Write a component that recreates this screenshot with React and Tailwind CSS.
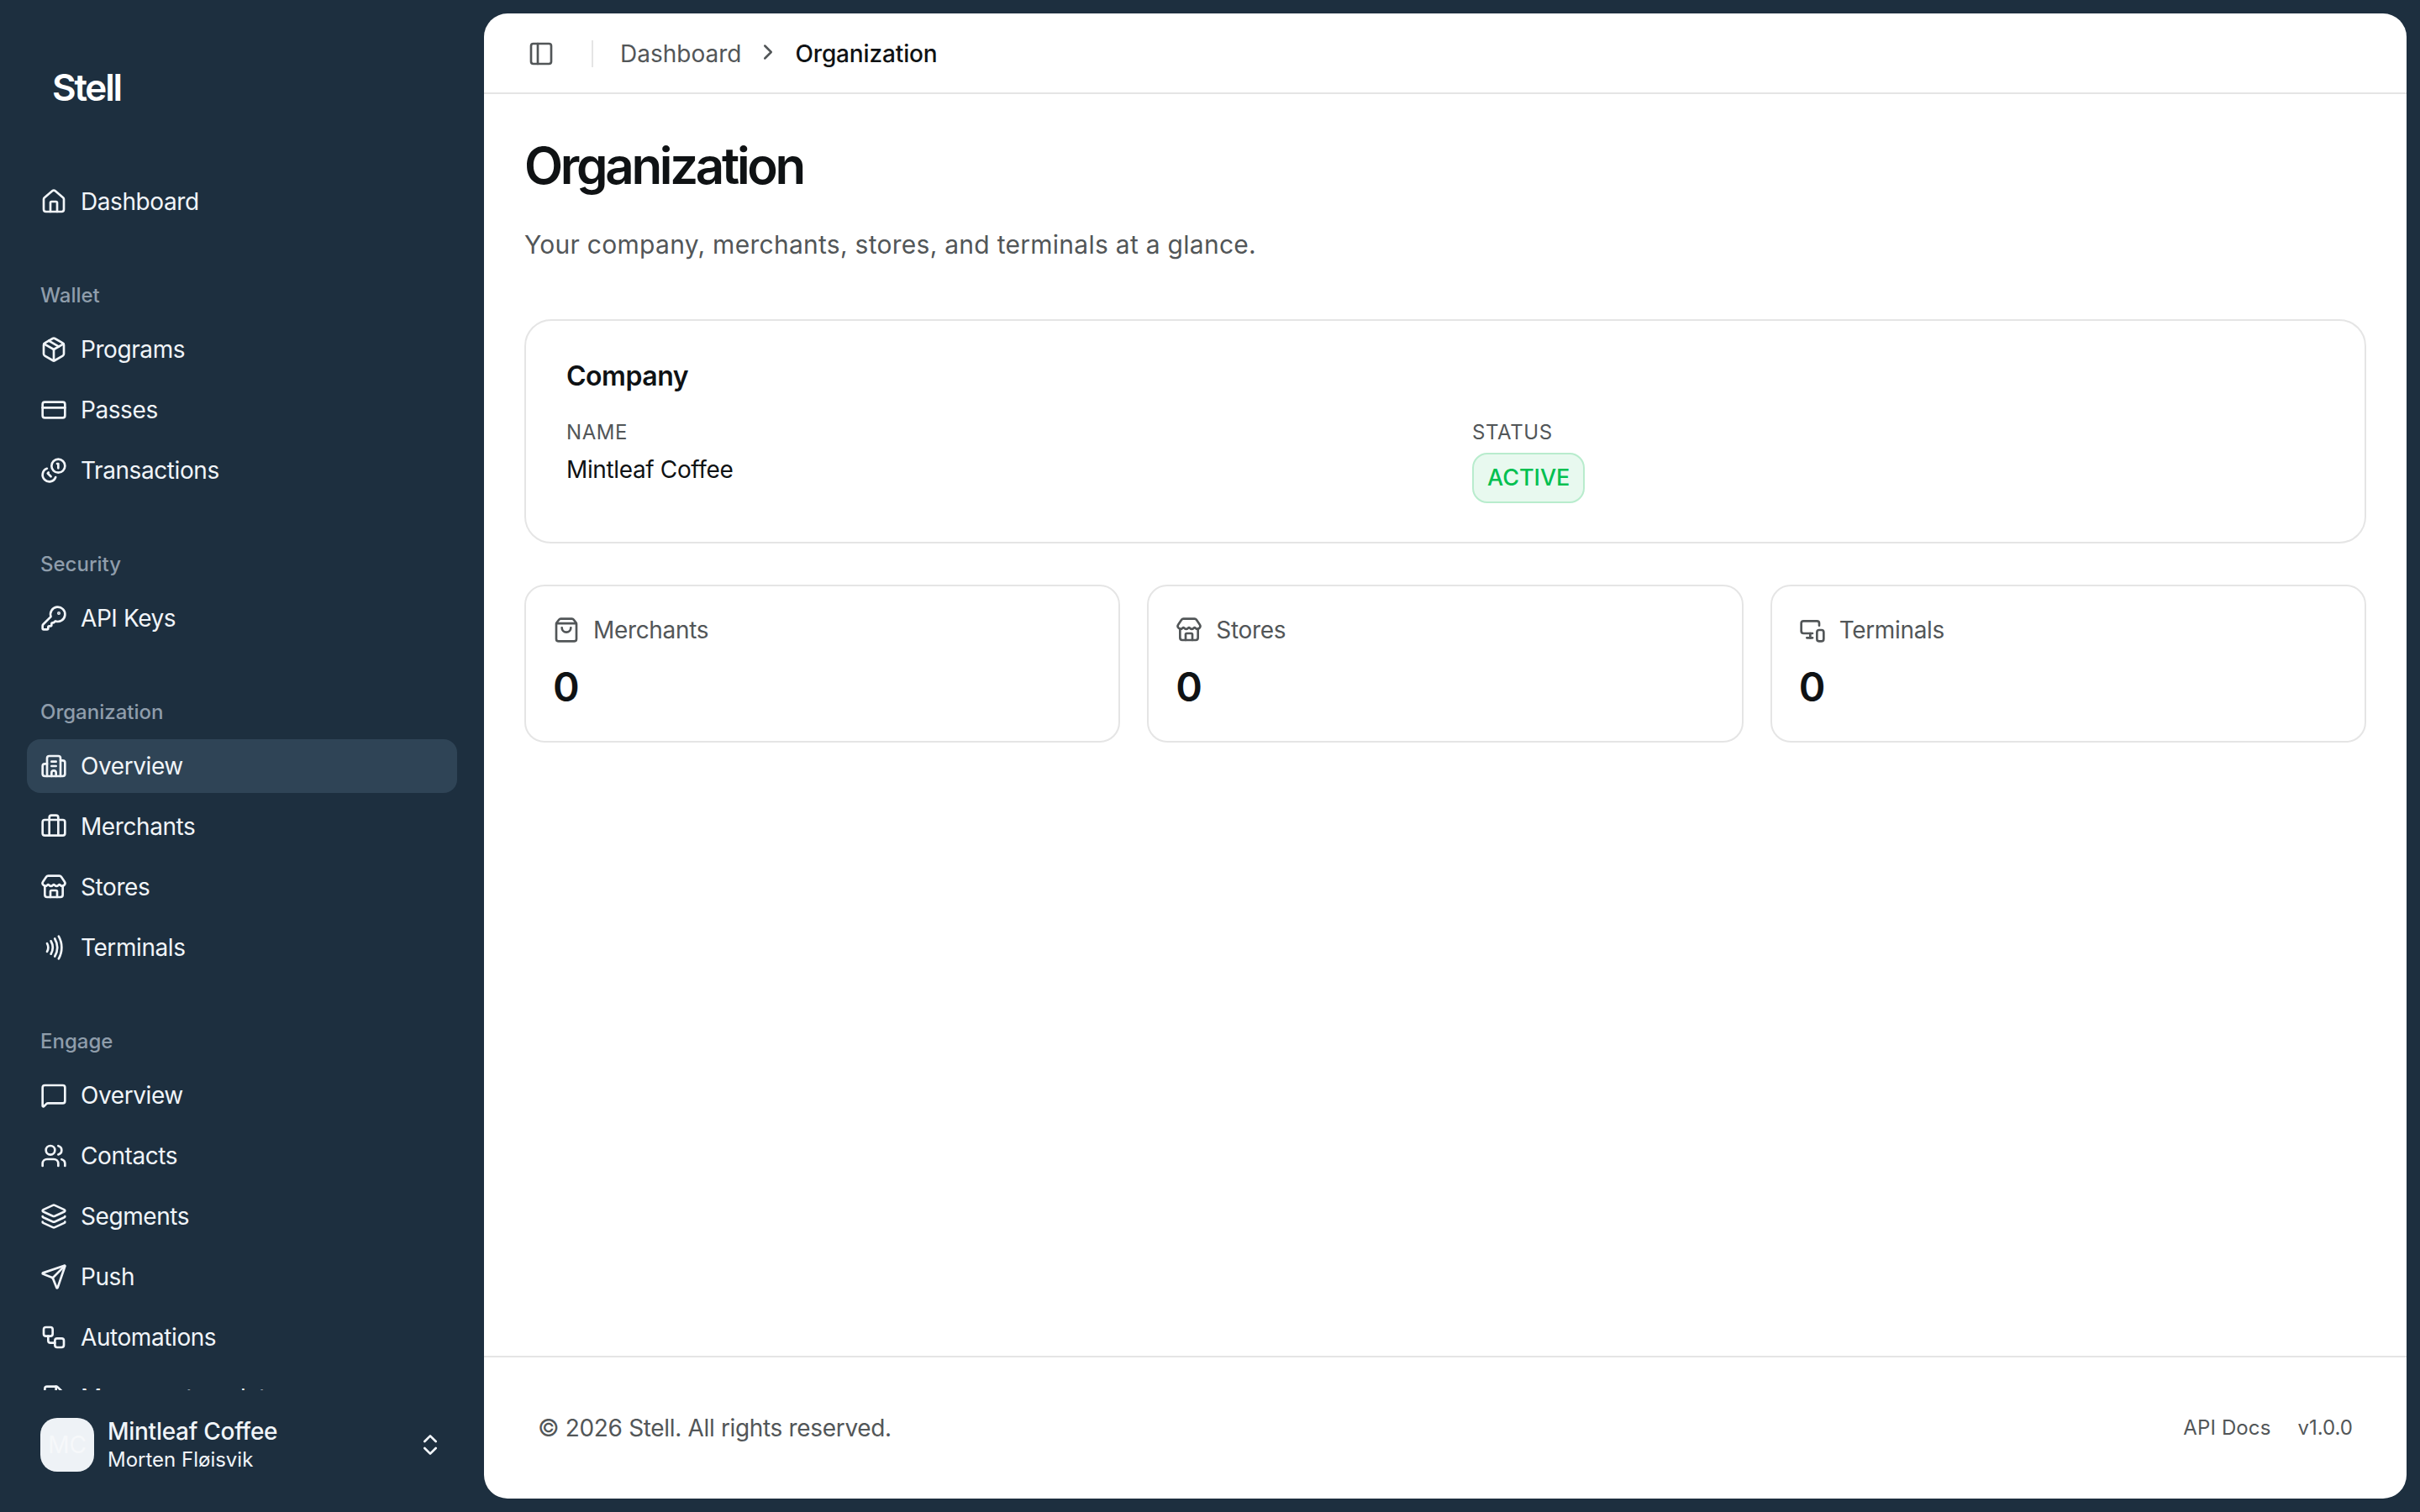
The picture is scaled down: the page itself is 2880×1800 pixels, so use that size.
import {
  Briefcase,
  ChevronRight,
  ChevronsUpDown,
  CreditCard,
  FileText,
  Building2,
  House,
  KeyRound,
  Layers,
  MessageSquare,
  MonitorSmartphone,
  Nfc,
  Package,
  PanelLeft,
  Send,
  ShoppingBag,
  Store,
  Users,
  Workflow,
} from "lucide-react";

const font = "font-['Inter','Liberation_Sans',sans-serif]";

// same as lucide's coins but with the big coin on the right
function CoinsIcon({ size, className }) {
  return (
    <svg
      width={size}
      height={size}
      viewBox="0 0 24 24"
      fill="none"
      stroke="currentColor"
      strokeWidth="2"
      strokeLinecap="round"
      strokeLinejoin="round"
      className={className}
    >
      <circle cx="16" cy="8" r="6" />
      <path d="M5.91 10.37A6 6 0 1 0 13.66 18" />
      <path d="M15 6h1v4" />
      <path d="m7.29 13.88-.7.71 2.82 2.82" />
    </svg>
  );
}

const groups = [
  {
    label: "Wallet",
    items: [
      { name: "Programs", icon: Package },
      { name: "Passes", icon: CreditCard },
      { name: "Transactions", icon: CoinsIcon },
    ],
  },
  { label: "Security", items: [{ name: "API Keys", icon: KeyRound }] },
  {
    label: "Organization",
    items: [
      { name: "Overview", icon: Building2, active: true },
      { name: "Merchants", icon: Briefcase },
      { name: "Stores", icon: Store },
      { name: "Terminals", icon: Nfc },
    ],
  },
  {
    label: "Engage",
    items: [
      { name: "Overview", icon: MessageSquare },
      { name: "Contacts", icon: Users },
      { name: "Segments", icon: Layers },
      { name: "Push", icon: Send },
      { name: "Automations", icon: Workflow },
      { name: "Message templates", icon: FileText },
    ],
  },
];

const stats = [
  { label: "Merchants", icon: ShoppingBag },
  { label: "Stores", icon: Store },
  { label: "Terminals", icon: MonitorSmartphone },
];

function NavItem({ item }) {
  const Icon = item.icon;
  return (
    <a
      className={`flex h-16 shrink-0 items-center gap-4 rounded-2xl px-4 text-[28px] tracking-[-0.015em] text-[#f1f5f9] ${
        item.active ? "bg-[#2f4456]" : ""
      }`}
    >
      <Icon size={32} className="shrink-0" />
      <span>{item.name}</span>
    </a>
  );
}

function Sidebar() {
  return (
    <aside className="flex h-full w-[576px] shrink-0 flex-col bg-[#1d2f3f]">
      <div className="flex h-[208px] shrink-0 items-center pl-[62px] text-[44px] leading-none font-semibold tracking-[-0.05em] text-white">
        Stell
      </div>
      <nav className="flex min-h-0 flex-1 flex-col overflow-hidden px-8">
        <div className="flex flex-col">
          <NavItem item={{ name: "Dashboard", icon: House }} />
        </div>
        {groups.map((group) => (
          <div key={group.label} className="mt-14 flex flex-col gap-2">
            <div className="flex h-12 items-center px-4 text-2xl font-medium text-[#8f9dab]">
              {group.label}
            </div>
            {group.items.map((item) => (
              <NavItem key={group.label + item.name} item={item} />
            ))}
          </div>
        ))}
      </nav>
      <div className="flex h-[145px] shrink-0 items-center gap-4 px-12 pb-[15px]">
        <div className="flex size-16 shrink-0 items-center justify-center rounded-[20px] bg-[#eef2f6] text-[28px] text-[#f6f8fa]">
          MC
        </div>
        <div className="min-w-0 flex-1">
          <div className="text-[28px] leading-[36px] font-medium tracking-[-0.01em] text-[#f1f5f9]">
            Mintleaf Coffee
          </div>
          <div className="text-2xl leading-[32px] text-[#f1f5f9]">Morten Fløisvik</div>
        </div>
        <ChevronsUpDown size={32} className="shrink-0 text-[#f1f5f9]" />
      </div>
    </aside>
  );
}

function Header() {
  return (
    <header className="flex h-24 shrink-0 items-center border-b-2 border-[#e5e5e5] px-[52px] pt-[2px]">
      <PanelLeft size={32} className="shrink-0 text-[#525658]" />
      <div className="mr-8 ml-[44px] h-8 w-[2px] bg-[#e5e5e5]" />
      <span className="text-[28px] text-[#525658]">Dashboard</span>
      <ChevronRight size={30} className="mx-[17px] mb-[4px] text-[#525658]" />
      <span className="text-[28px] font-medium tracking-[-0.005em] text-[#0f1214]">Organization</span>
    </header>
  );
}

function CompanyCard() {
  return (
    <section className="rounded-[32px] border-2 border-[#e5e5e5] px-12 pt-[48px] pb-[46px]">
      <h2 className="text-[32px] leading-[36px] font-semibold tracking-[-0.015em] text-[#0f1214]">
        Company
      </h2>
      <div className="mt-[33px] grid grid-cols-2 gap-16">
        <div>
          <div className="text-2xl leading-[32px] tracking-[0.025em] text-[#525658] uppercase">
            Name
          </div>
          <div className="mt-2 text-[28px] leading-[40px] tracking-[-0.013em] text-[#0f1214]">
            Mintleaf Coffee
          </div>
        </div>
        <div>
          <div className="text-2xl leading-[32px] tracking-[0.025em] text-[#525658] uppercase">
            Status
          </div>
          <div className="mt-2 inline-flex h-[60px] items-center rounded-[18px] border-2 border-[#b8eccd] bg-[#e8f9ef] px-4 text-[27px] font-medium text-[#00c050]">
            ACTIVE
          </div>
        </div>
      </div>
    </section>
  );
}

function StatCard({ stat }) {
  const Icon = stat.icon;
  return (
    <div className="h-[188px] rounded-3xl border-2 border-[#e5e5e5] px-8 pt-9">
      <div className="flex h-8 items-center gap-4 text-[28px] tracking-[-0.012em] text-[#525658]">
        <Icon size={32} className="shrink-0" />
        <span>{stat.label}</span>
      </div>
      <div className="mt-6 text-5xl leading-[56px] font-semibold text-[#0f1214]">0</div>
    </div>
  );
}

function Footer() {
  return (
    <footer className="flex h-[170px] shrink-0 items-center justify-between border-t-2 border-[#e5e5e5] px-16 text-[#525658]">
      <span className="text-[28px] tracking-[-0.012em]">© 2026 Stell. All rights reserved.</span>
      <div className="flex items-center gap-8 text-2xl">
        <span className="tracking-[0.005em]">API Docs</span>
        <span>v1.0.0</span>
      </div>
    </footer>
  );
}

export default function App() {
  return (
    <div className={`flex h-screen overflow-hidden bg-[#1d2f3f] ${font}`}>
      <Sidebar />
      <div className="my-4 mr-4 flex min-w-0 flex-1 flex-col overflow-hidden rounded-[28px] bg-white">
        <Header />
        <main className="min-h-0 flex-1 px-12 pt-[45px]">
          <h1 className="text-[60px] leading-[80px] font-semibold tracking-[-0.055em] text-[#0f1214]">
            Organization
          </h1>
          <p className="mt-[30px] text-[30px] leading-[48px] tracking-[0.009em] text-[#525658]">
            Your company, merchants, stores, and terminals at a glance.
          </p>
          <div className="mt-[65px]">
            <CompanyCard />
          </div>
          <div className="mt-[49px] grid grid-cols-3 gap-8">
            {stats.map((stat) => (
              <StatCard key={stat.label} stat={stat} />
            ))}
          </div>
        </main>
        <Footer />
      </div>
    </div>
  );
}
